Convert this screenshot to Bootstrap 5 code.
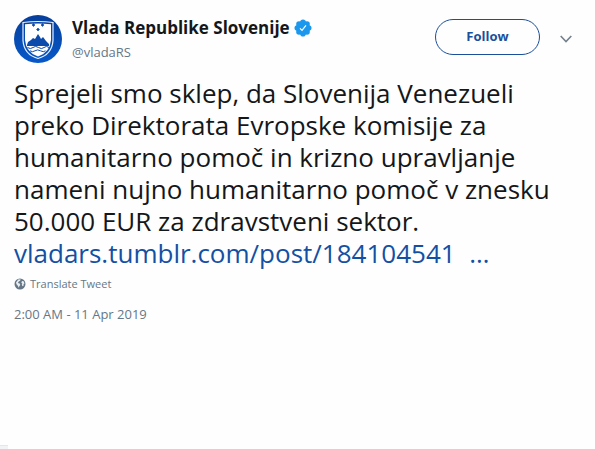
<!DOCTYPE html>
<html lang="sl">
<head>
<meta charset="utf-8">
<meta name="viewport" content="width=device-width, initial-scale=1">
<title>Vlada Republike Slovenije</title>
<link href="https://cdn.jsdelivr.net/npm/bootstrap@5.3.0/dist/css/bootstrap.min.css" rel="stylesheet">
<style>
body { font-family: "Open Sans", "Noto Sans", sans-serif; color: #14171a; background: #fefefe; }
.tweet { padding: 15px 14px 0; }
.muted { color: #657786; }
.avatar { width: 48px; height: 48px; margin-right: 10px; }
.author { font-size: 17px; line-height: 26px; }
.verified { width: 18px; height: 18px; }
.handle { font-size: 13px; line-height: 22px; }
.follow { width: 105px; height: 36px; margin-right: 20px; padding: 0; border: 1px solid #1b4f9c; color: #1b4f9c; font-size: 13px; font-weight: 700; }
.more { margin-right: 9px; }
.message { font-size: 26px; line-height: 32px; margin-top: 14px; }
.message a { color: #1350a4; white-space: pre; }
.translate { font-size: 11px; line-height: 16px; margin-top: 7px; gap: 4px; }
.stamp { font-size: 13px; line-height: 20px; margin-top: 12px; }
.next-panel { width: 8px; height: 4px; background: #f0f4f6; border-top: 1px solid #e2e8ea; }
</style>
</head>
<body>
<main class="d-flex flex-column min-vh-100">
  <article class="tweet">
    <header class="d-flex align-items-start">
      <svg class="avatar flex-shrink-0" viewBox="0 0 48 48" aria-hidden="true">
        <defs>
          <linearGradient id="sea" x1="0" y1="0" x2="0" y2="1"><stop offset="0" stop-color="#063f9b"/><stop offset="1" stop-color="#0758c9"/></linearGradient>
        </defs>
        <circle cx="24" cy="24" r="24" fill="url(#sea)"/>
        <path d="M9 7.500q15-2 30 0v18q-1 14-15 18-14-4-15-18z" fill="none" stroke="#e8f1ff" stroke-width="1.200"/>
        <path d="M11 9.200q13-1.500 26 0V25q-1 12.500-13 16.500Q12 37.500 11 25z" fill="#fff"/>
        <path d="M13 30l1-3 3-2 2-2 2 1 3-5 2 3 1 2 2-2 3 4 3 3v2H13z" fill="#0b4bac"/>
        <path d="M13.500 32.500q3 2.200 5.500 0t5.500 0 5.500 0 5 0M16 35.800q2.500 1.800 5 0t5.500 0 5 0" fill="none" stroke="#0b4bac" stroke-width="1"/>
        <path d="M19.500 8.500l1.500 1.500-1.500 1.500L18 10zM28.500 8.500L30 10l-1.500 1.500L27 10zM24 13l1.500 1.500L24 16l-1.500-1.500z" fill="#0b4bac" stroke="#0b4bac" stroke-width=".6"/>
      </svg>
      <div class="flex-grow-1">
        <div class="author fw-bold d-flex align-items-center">Vlada Republike Slovenije
          <svg class="verified ms-1" viewBox="0 0 18 18" role="img" aria-label="Verified">
            <g fill="#1b98ed"><circle cx="9" cy="9" r="7"/><circle cx="9" cy="3.300" r="2.800"/><circle cx="13" cy="5" r="2.800"/><circle cx="14.700" cy="9" r="2.800"/><circle cx="13" cy="13" r="2.800"/><circle cx="9" cy="14.700" r="2.800"/><circle cx="5" cy="13" r="2.800"/><circle cx="3.300" cy="9" r="2.800"/><circle cx="5" cy="5" r="2.800"/></g>
            <path d="M6 9.300l2 2 4-5" fill="none" stroke="#fff" stroke-width="1.200"/>
          </svg>
        </div>
        <div class="handle muted">@vladaRS</div>
      </div>
      <div class="d-flex align-items-center pt-1">
        <button type="button" class="btn follow rounded-pill">Follow</button>
        <button type="button" class="btn more p-0 border-0 lh-1" aria-label="More">
          <svg width="12" height="8" viewBox="0 0 12 8" fill="none" stroke="#74808b" stroke-width="1.600"><path d="M.7 1L6 6.500 11.300 1"/></svg>
        </button>
      </div>
    </header>
    <p class="message mb-0">Sprejeli smo sklep, da Slovenija Venezueli preko Direktorata Evropske komisije za humanitarno pomoč in krizno upravljanje nameni nujno humanitarno pomoč v znesku 50.000 EUR za zdravstveni sektor. <a class="text-decoration-none" href="#">vladars.tumblr.com/post/184104541  …</a></p>
    <button type="button" class="btn translate muted p-0 border-0 d-flex align-items-center">
      <svg width="12" height="12" viewBox="0 0 12 12" aria-hidden="true"><circle cx="6" cy="6" r="5.500" fill="#657786"/><path d="M4.300 1.600l2.300-.3-.5 1.500-1.400.8-.8 1.300 1.800.6.6 1.400-1 1.300-.5 1.500-1-2L2.500 6.300 2 4.500zM8 3l1.600.3.9 2.200-1 .5.2 1.600-1.200.6-.7-1.500.5-1.200-1-.8z" fill="#e9eef1"/></svg>
      Translate Tweet
    </button>
    <div class="stamp muted">2:00 AM - 11 Apr 2019</div>
  </article>
  <div class="next-panel mt-auto"></div>
</main>
<script src="https://cdn.jsdelivr.net/npm/bootstrap@5.3.0/dist/js/bootstrap.bundle.min.js"></script>
</body>
</html>
